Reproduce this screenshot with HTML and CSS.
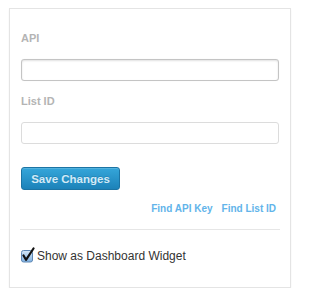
FILE: index.html
```html
<!DOCTYPE html>
<html>
<head>
<meta charset="utf-8">
<link rel="stylesheet" href="styles.css">
</head>
<body>
<div class="card">
  <label class="label">API</label>
  <div class="input focused"></div>
  <label class="label label-list">List ID</label>
  <div class="input"></div>
  <button class="btn">Save Changes</button>
  <div class="links">
    <a class="link">Find API Key</a>
    <a class="link">Find List ID</a>
  </div>
  <div class="sep"></div>
  <div class="check-row">
    <svg class="check" width="14" height="16" viewBox="0 0 14 16">
      <defs>
        <linearGradient id="cb" x1="0" y1="0" x2="0" y2="1">
          <stop offset="0" stop-color="#d6e8f8"/>
          <stop offset="1" stop-color="#7fb0e0"/>
        </linearGradient>
      </defs>
      <rect x="0.5" y="3.5" width="11" height="11.5" rx="2" fill="url(#cb)" stroke="#5f88b4"/>
      <path d="M2.5 8.5 L5 12.8 L12.5 1.5" fill="none" stroke="#111" stroke-width="2.2" stroke-linecap="round" stroke-linejoin="round"/>
    </svg>
    <span class="check-text">Show as Dashboard Widget</span>
  </div>
</div>
</body>
</html>
```

FILE: styles.css
```css
html, body {
  margin: 0;
  padding: 0;
  background: #ffffff;
}
body {
  font-family: "Liberation Sans", Arial, sans-serif;
}
.card {
  box-sizing: border-box;
  margin: 8px 0 0 9px;
  width: 282px;
  height: 280px;
  border: 1px solid #e4e4e4;
  box-shadow: 0 1px 2px rgba(0,0,0,0.05);
  padding: 23px 11px 0 11px;
  display: flex;
  flex-direction: column;
}
.label {
  display: block;
  font-size: 11px;
  line-height: 13px;
  font-weight: bold;
  color: #b4b4b4;
}
.input {
  box-sizing: border-box;
  height: 22px;
  margin-top: 14px;
  border: 1px solid #dcdcdc;
  border-radius: 3px;
  background: #fff;
}
.input.focused {
  border-color: #c4c4c4;
  box-shadow: inset 0 1px 2px rgba(0,0,0,0.12), 0 0 1px rgba(0,0,0,0.08);
}
.label-list {
  margin-top: 14px;
}
.label-list + .input {
  margin-top: 14px;
}
.btn {
  align-self: flex-start;
  margin-top: 23px;
  box-sizing: border-box;
  width: 99px;
  height: 23px;
  padding: 0;
  border: 1px solid #1c74a4;
  border-radius: 3px;
  background: linear-gradient(#35a6da, #1c82b9);
  color: #d2eaf7;
  font-family: "Liberation Sans", Arial, sans-serif;
  font-size: 11.5px;
  font-weight: bold;
  text-shadow: 0 -1px 0 rgba(0,0,0,0.12);
  box-shadow: inset 0 1px 0 rgba(255,255,255,0.15);
}
.links {
  margin-top: 13px;
  display: flex;
  justify-content: flex-end;
  gap: 9px;
  padding-right: 3px;
  font-size: 10px;
  line-height: 12px;
  font-weight: bold;
}
.link {
  color: #62b4ea;
  text-decoration: none;
}
.sep {
  margin: 14px -1px 0 -1px;
  height: 1px;
  background: #e6e6e6;
}
.check-row {
  margin-top: 19px;
  display: flex;
  align-items: center;
  gap: 2px;
}
.check {
  display: block;
  margin-top: -3px;
}
.check-text {
  font-size: 12px;
  line-height: 14px;
  color: #333;
}
```
